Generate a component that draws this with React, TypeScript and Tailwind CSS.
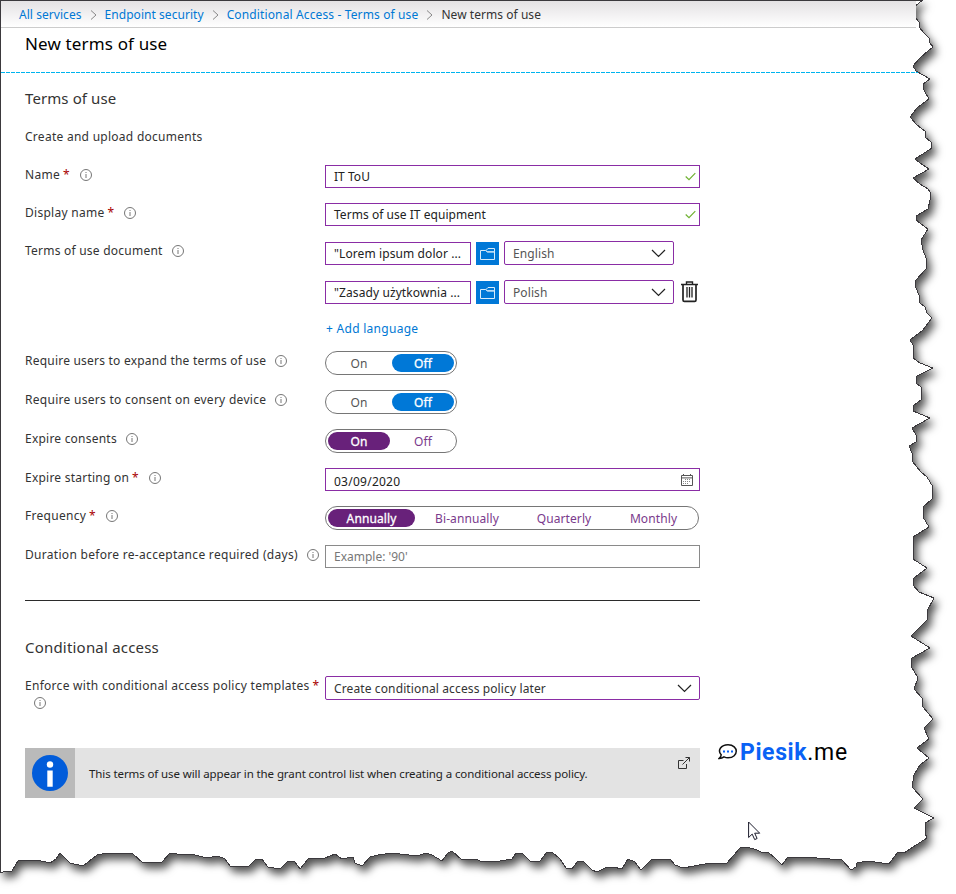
import type { ReactNode } from "react";

const TORN_EDGE =
  "M0.5 0.5 L922 0.5 L914 7 L916 18 L919 22 L920 28 L923 32 L929 38 L930 43 L933 47 L928 51 L920 58 L913 66 L916 71 L930 79 L923 84 L924 90 L929 99 L917 108 L910 117 L917 125 L925 131 L925 137 L931 142 L932 148 L915 159 L920 163 L929 169 L913 178 L920 184 L928 189 L931 193 L930 200 L928 209 L916 216 L916 220 L928 229 L921 240 L923 250 L926 258 L926 269 L915 281 L916 288 L919 295 L920 303 L925 307 L927 313 L932 318 L923 330 L910 340 L913 345 L913 358 L920 363 L933 368 L917 376 L916 383 L921 387 L921 400 L914 405 L913 411 L930 418 L912 428 L916 435 L916 442 L909 446 L912 453 L912 461 L921 472 L927 477 L933 487 L932 499 L923 507 L923 517 L929 527 L913 537 L913 559 L927 568 L914 578 L913 585 L919 592 L934 598 L927 611 L927 620 L911 636 L930 648 L912 658 L911 666 L918 678 L914 689 L922 698 L923 707 L933 719 L924 728 L929 739 L917 748 L929 758 L920 765 L914 775 L912 787 L923 799 L914 808 L934 818 L925 823 L925 833 L927 838 L913 847 L904 853 L898 852 L889 864 L868 861 L857 863 L856 867 L851 870 L842 860 L817 858 L788 857 L782 865 L776 859 L768 852 L763 853 L757 850 L747 847 L740 848 L727 863 L705 864 L683 868 L675 865 L670 859 L652 859 L641 870 L635 862 L628 859 L622 869 L613 867 L605 868 L597 872 L592 870 L584 862 L578 861 L572 869 L566 868 L560 859 L552 852 L547 852 L540 861 L530 861 L522 853 L516 853 L512 859 L500 861 L483 862 L475 859 L462 860 L452 851 L448 853 L442 861 L432 855 L426 853 L417 856 L392 853 L378 855 L370 857 L362 866 L355 863 L353 857 L342 859 L335 854 L325 858 L308 859 L300 869 L295 862 L288 861 L280 869 L268 867 L262 859 L255 860 L248 867 L230 866 L225 859 L218 856 L207 858 L195 855 L177 854 L170 853 L162 862 L143 863 L133 854 L107 853 L97 855 L83 866 L70 863 L60 853 L56 859 L50 863 L37 860 L18 861 L12 871 L3 872 L0.5 872 Z";

function PageSheet() {
  return (
    <svg className="absolute inset-0" width="956" height="894" viewBox="0 0 956 894" fill="none">
      <defs>
        <filter id="sheet-shadow" x="-20" y="-20" width="1000" height="940" filterUnits="userSpaceOnUse" colorInterpolationFilters="sRGB">
          <feDropShadow dx="3.5" dy="5.5" stdDeviation="4" floodColor="#000" floodOpacity="0.68" />
        </filter>
      </defs>
      <path d={TORN_EDGE} fill="#fff" stroke="#3b393d" strokeWidth="1" shapeRendering="crispEdges" filter="url(#sheet-shadow)" />
    </svg>
  );
}

function Info({ className = "" }: { className?: string }) {
  return (
    <svg className={"shrink-0 " + className} width="12" height="12" viewBox="0 0 12 12" fill="none">
      <circle cx="6" cy="6" r="5.5" stroke="#666" strokeWidth="0.9" />
      <path d="M6 5v4" stroke="#777" />
      <path d="M6 3v1" stroke="#777" />
    </svg>
  );
}

function Label({ children, required, tracking = "tracking-[0.28px]" }: { children: ReactNode; required?: boolean; tracking?: string }) {
  return (
    <div className={"flex h-5 w-[300px] shrink-0 items-center whitespace-nowrap text-[#333] " + tracking}>
      <span>{children}</span>
      {required && <span className="ml-[3px] mr-px text-[#a80000]">*</span>}
      <Info className="ml-[9px]" />
    </div>
  );
}

function Check() {
  return (
    <svg width="11" height="9" viewBox="0 0 11 9" fill="none">
      <path d="M0.7 4.5 4 7.6 10.3 1.2" stroke="#70b232" strokeWidth="1.2" />
    </svg>
  );
}

function Chevron() {
  return (
    <svg width="15" height="9" viewBox="0 0 15 9" fill="none">
      <path d="M1 1l6.5 6.5L14 1" stroke="#222" strokeWidth="1.2" />
    </svg>
  );
}

function TextInput({ value }: { value: string }) {
  return (
    <div className="flex h-[23px] w-[375px] items-center justify-between border border-[#8a2da5] pl-2 pr-[3px] text-[#222]">
      <span className="tracking-[0.04px]">{value}</span>
      <Check />
    </div>
  );
}

function FileRow({ file, language }: { file: string; language: string }) {
  return (
    <div className="flex items-start">
      <div className="mt-px flex h-[23px] w-[146px] items-center whitespace-nowrap border border-[#8a2da5] pl-2 tracking-[0.1px] text-[#222]">{file}</div>
      <div className="ml-[5px] mt-px flex size-[23px] items-center justify-center bg-[#0078d7]">
        <svg width="15" height="12" viewBox="0 0 15 12" fill="none" stroke="#d8ebfa">
          <path d="M.5 2.5h5.2l1.6 1.4h7.2v7.6H.5z" />
          <path d="M6 2.5 8 .5h6.5v3.4H7.3z" />
        </svg>
      </div>
      <div className="ml-[5px] flex h-6 w-[170px] items-center justify-between rounded-[2px] border border-[#8a2da5] pl-2 pr-[7px] text-[#555]">
        <span className="pt-[2px] tracking-[0.1px]">{language}</span>
        <Chevron />
      </div>
    </div>
  );
}

function Trash() {
  return (
    <svg className="ml-[7px] mt-px" width="17" height="22" viewBox="0 0 17 22" fill="none" stroke="#222">
      <path d="M0 3.5h17M5.5 3V1h6v2" strokeWidth="1.4" />
      <path d="M2 4v15q0 1.4 1.4 1.4h10.2q1.4 0 1.4-1.4V4" strokeWidth="1.7" />
      <path d="M6 6v10.5M8.5 6v10.5M11 6v10.5" strokeWidth="1.3" />
    </svg>
  );
}

function Toggle({ value, purple }: { value: "On" | "Off"; purple?: boolean }) {
  const active = purple ? "bg-[#68217a] text-white [-webkit-text-stroke:0.3px]" : "bg-[#0078d7] text-white [-webkit-text-stroke:0.3px]";
  const idle = purple ? "text-[#7a3a8c]" : "text-[#555]";
  return (
    <div className="flex h-6 w-[132px] items-center gap-[2px] rounded-full border border-[#767676] px-[2px]">
      {["On", "Off"].map((o) => (
        <div key={o} className={"flex h-[18px] w-[62px] items-center justify-center rounded-full pt-[2px] tracking-[0.2px] " + (o === value ? active : idle)}>
          {o}
        </div>
      ))}
    </div>
  );
}

function Calendar() {
  return (
    <svg width="12" height="12" viewBox="0 0 12 12" fill="none" stroke="#555">
      <path d="M.5 1.5h11v10H.5zM.5 3.9h11" />
      <path d="M2.5 0v2M9.5 0v2" />
      <path d="M4 5.5h6M2 7.5h8M2 9.5h6" stroke="#888" strokeDasharray="1 1" />
    </svg>
  );
}

function Crumb() {
  return (
    <svg className="mx-2" width="7" height="10" viewBox="0 0 7 10" fill="none">
      <path d="M1 .5 6 5 1 9.5" stroke="#888" />
    </svg>
  );
}

export default function App() {
  return (
    <div className="relative h-[894px] w-[956px] overflow-hidden bg-white font-['Noto_Sans',sans-serif] text-[12px] leading-5">
      <PageSheet />
      <div className="relative pl-px pt-px">
        <nav className="flex h-[27px] w-[915px] items-center whitespace-nowrap border-b border-[#ccc] bg-gradient-to-b from-[#e4e2e4] to-white pl-[18px] pt-px tracking-[0.05px] text-[#0078d4]">
          <span>All services</span>
          <Crumb />
          <span>Endpoint security</span>
          <Crumb />
          <span className="tracking-[0.13px]">Conditional Access - Terms of use</span>
          <Crumb />
          <span className="text-[#333]">New terms of use</span>
        </nav>
        <header className="h-[45px] w-[916px] pl-6 pt-[5px]">
          <h1 className="text-[17px] leading-[22px] tracking-[0.15px] text-black">New terms of use</h1>
        </header>
        <svg className="-mt-px block" width="917" height="1">
          <path d="M0 .5h917" stroke="#00b4ee" strokeDasharray="4 1" />
        </svg>

        <main className="w-[699px] pl-6">
          <h2 className="mt-[15px] text-[15px] leading-5 tracking-[0.1px] text-[#333]">Terms of use</h2>
          <p className="mt-[19px] tracking-[0.27px] text-[#333]">Create and upload documents</p>

          <div className="mt-[18px] flex h-[38px]">
            <Label required>Name</Label>
            <TextInput value="IT ToU" />
          </div>
          <div className="flex h-[38px]">
            <Label required>Display name</Label>
            <TextInput value="Terms of use IT equipment" />
          </div>
          <div className="flex h-[39px]">
            <Label tracking="tracking-[0.23px]">Terms of use document</Label>
            <FileRow file={'"Lorem ipsum dolor ...'} language="English" />
          </div>
          <div className="flex h-[39px] pl-[300px]">
            <FileRow file={'"Zasady użytkownia ...'} language="Polish" />
            <Trash />
          </div>
          <div className="h-8 pl-[301px] tracking-[0.28px] text-[#0078d4]">+ Add language</div>
          <div className="flex h-[39px]">
            <Label tracking="tracking-[0.22px]">Require users to expand the terms of use</Label>
            <Toggle value="Off" />
          </div>
          <div className="flex h-[39px]">
            <Label>Require users to consent on every device</Label>
            <Toggle value="Off" />
          </div>
          <div className="flex h-[39px]">
            <Label tracking="tracking-[0.22px]">Expire consents</Label>
            <Toggle value="On" purple />
          </div>
          <div className="flex h-[38px]">
            <Label required tracking="tracking-[0.23px]">Expire starting on</Label>
            <div className="flex h-[23px] w-[375px] items-center justify-between border border-[#8a2da5] pl-2 pr-1.5 text-[#222]">
              <span className="pt-1 tracking-[0.25px]">03/09/2020</span>
              <Calendar />
            </div>
          </div>
          <div className="flex h-[39px]">
            <Label required>Frequency</Label>
            <div className="flex h-6 w-[374px] items-center rounded-full border border-[#767676] pl-[2px] tracking-[0.1px] text-[#7a3a8c]">
              <div className="flex h-[18px] w-[87px] items-center justify-center rounded-full bg-[#68217a] pt-[2px] text-white [-webkit-text-stroke:0.3px]">Annually</div>
              <span className="w-[104px] pt-[2px] text-center">Bi-annually</span>
              <span className="w-[90px] pt-[2px] text-center">Quarterly</span>
              <span className="w-[89px] pt-[2px] text-center">Monthly</span>
            </div>
          </div>
          <div className="flex h-[55px]">
            <Label tracking="tracking-[0.3px]">Duration before re-acceptance required (days)</Label>
            <div className="flex h-[23px] w-[375px] items-center border border-[#8a8a8a] pl-2 text-[#777]">Example: '90'</div>
          </div>
          <div className="h-px w-[675px] bg-[#2b2b2b]" />

          <h2 className="mt-9 text-[15px] leading-5 tracking-[0.2px] text-[#333]">Conditional access</h2>
          <div className="mt-[19px] flex h-[72px]">
            <div className="w-[300px] shrink-0 text-[#333]">
              <div className="flex h-5 items-center whitespace-nowrap tracking-[0.28px]">
                Enforce with conditional access policy templates
                <span className="ml-[3px] text-[#a80000]">*</span>
              </div>
              <Info className="ml-[9px] mt-px" />
            </div>
            <div className="flex h-6 w-[375px] items-center justify-between rounded-[2px] border border-[#8a2da5] pl-2 pr-[7px] text-[#333]">
              <span className="pt-[2px] tracking-[0.12px]">Create conditional access policy later</span>
              <Chevron />
            </div>
          </div>
          <div className="flex h-[50px] w-[675px] items-center bg-[#e3e3e3]">
            <div className="flex size-[50px] items-center justify-center bg-[#bababa]">
              <svg width="36" height="36" viewBox="0 0 36 36">
                <circle cx="18" cy="18" r="18" fill="#015cda" />
                <circle cx="18" cy="9.5" r="3.2" fill="#fff" />
                <path d="M15.3 15.5h5.4v16.2h-5.4z" fill="#fff" />
              </svg>
            </div>
            <span className="ml-[14px] whitespace-nowrap pt-[2px] text-[11.5px] tracking-[-0.1px] text-[#222]">
              This terms of use will appear in the grant control list when creating a conditional access policy.
            </span>
            <svg className="mb-[20px] ml-auto mr-[10px]" width="12" height="12" viewBox="0 0 12 12" fill="none" stroke="#333">
              <path d="M5.5 3.5H.5v8h8V7M4.5 7.5l7-7M7.5.5h4v4" />
            </svg>
          </div>
        </main>
      </div>

      <div className="absolute left-[718px] top-[741px] flex items-center whitespace-nowrap font-[Roboto,sans-serif] text-[23px] leading-6">
        <svg className="-mt-[2px]" width="20" height="18" viewBox="0 0 20 18" fill="none">
          <path d="M3.2 11.8C-1 7 3.3 1.8 10 1.8c11 0 11 13 0 13-2 0-3.2-.6-4-1-1.4 1.1-2.8 1.6-4.8 1.6 1.4-1.1 2-2.2 2-3.6Z" stroke="#111" strokeWidth="1.5" />
          <path d="M5 8.5h2M9 8.5h2M13 8.5h2" stroke="#0a62f5" strokeWidth="1.8" />
        </svg>
        <span className="ml-[2px] font-bold tracking-[0.6px] text-[#0a62f5]">Piesik</span>
        <span className="tracking-[0.8px] text-black">.me</span>
      </div>

      <svg className="absolute left-[748px] top-[821px]" width="13" height="20" viewBox="0 0 13 20">
        <path d="M.6 1v15.5l3.6-3.4 2.5 5.5 2.4-1.1-2.4-5.3h5L.6 1Z" fill="#fff" stroke="#1a1a2a" />
      </svg>
    </div>
  );
}
